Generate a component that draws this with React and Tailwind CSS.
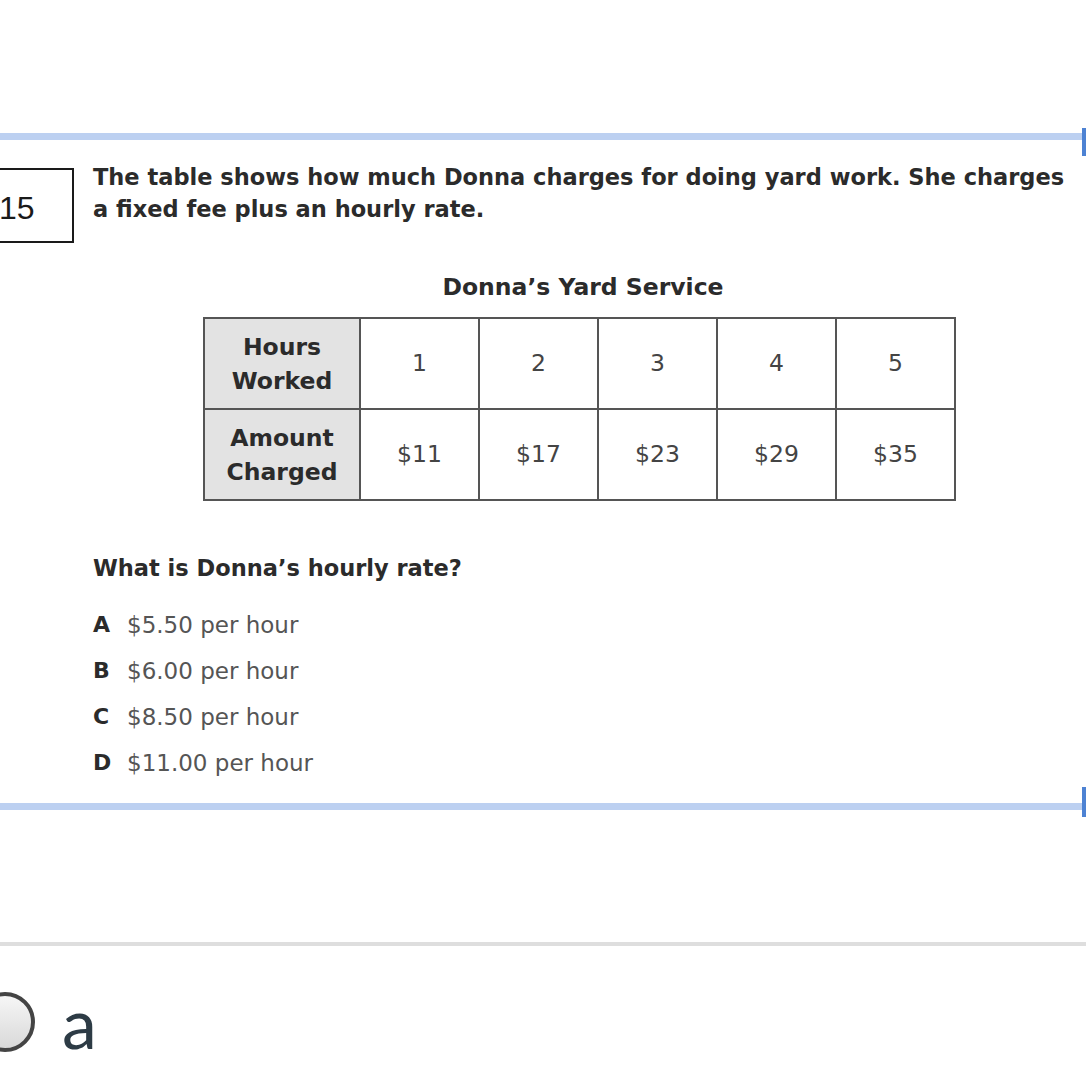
export default function App() {
  const hours = ['1', '2', '3', '4', '5']
  const amounts = ['$11', '$17', '$23', '$29', '$35']
  const options = [
    ['A', '$5.50 per hour'],
    ['B', '$6.00 per hour'],
    ['C', '$8.50 per hour'],
    ['D', '$11.00 per hour'],
  ]

  return (
    <div className="relative w-[1086px] h-[1086px] overflow-hidden bg-white font-['DejaVu_Sans',sans-serif] text-[#2b2b2b]">
      <div className="h-[133px]" />

      {/* Question card */}
      <div className="relative border-y-[7px] border-[#bcd0f1]">
        <div className="absolute right-0 top-[-12px] w-[4px] h-[28px] bg-[#4d82d3]" />
        <div className="absolute right-0 bottom-[-14px] w-[4px] h-[30px] bg-[#4d82d3]" />

        <div className="flex items-start pt-[21px]">
          <div className="-ml-[4px] mt-[7px] w-[78px] h-[75px] border-2 border-[#1a1a1a] flex items-center pt-[4px] pl-[1px] font-['Liberation_Sans',sans-serif] text-[32px] text-[#1a1a1a]">
            15
          </div>
          <p className="ml-[19px] w-[975px] text-[22.5px] leading-[32px] font-bold">
            The table shows how much Donna charges for doing yard work. She charges a fixed fee plus an hourly rate.
          </p>
        </div>

        <div className="mt-[30px] text-center pl-[80px] text-[23.5px] leading-[28px] font-bold">
          Donna’s Yard Service
        </div>

        <table className="mt-[16px] ml-[203px] border-collapse border-2 border-[#555] text-[23.5px]">
          <tbody>
            <tr className="h-[91px]">
              <th className="w-[156px] border-2 border-[#555] bg-[#e3e3e3] leading-[34px] font-bold">
                Hours<br />Worked
              </th>
              {hours.map((h) => (
                <td key={h} className="w-[119px] border-2 border-[#555] text-center font-normal text-[#444]">{h}</td>
              ))}
            </tr>
            <tr className="h-[91px]">
              <th className="border-2 border-[#555] bg-[#e3e3e3] leading-[34px] font-bold">
                Amount<br />Charged
              </th>
              {amounts.map((a) => (
                <td key={a} className="border-2 border-[#555] text-center font-normal text-[#444]">{a}</td>
              ))}
            </tr>
          </tbody>
        </table>

        <p className="mt-[53px] ml-[93px] text-[22.5px] leading-[28px] font-bold">What is Donna’s hourly rate?</p>

        <div className="mt-[29px] ml-[93px] pb-[26px] flex flex-col gap-[18px]">
          {options.map(([l, t]) => (
            <div key={l} className="flex text-[23px] leading-[28px]">
              <span className="w-[34px] font-bold text-[22px]">{l}</span>
              <span className="text-[#555]">{t}</span>
            </div>
          ))}
        </div>
      </div>

      {/* Answer area */}
      <div className="mt-[132px] h-[4px] bg-[#dedede]" />
      <div className="mt-[46px] flex items-center">
        <div className="-ml-[25px] w-[60px] h-[60px] rounded-full border-4 border-[#444] bg-gradient-to-b from-[#f6f6f6] to-[#d9d9d9]" />
        <span className="ml-[27px] font-['Lato',sans-serif] text-[70px] leading-[60px] text-[#2d3b45]">a</span>
      </div>
    </div>
  )
}
